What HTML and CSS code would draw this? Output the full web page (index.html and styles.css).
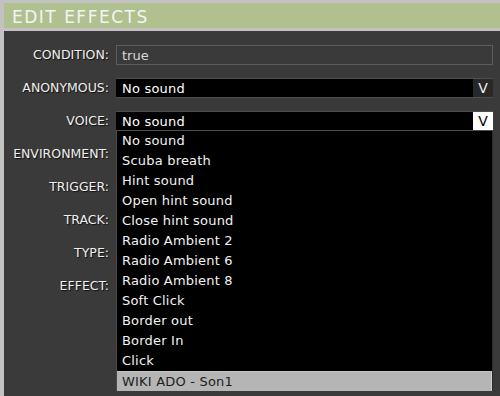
FILE: index.html
```html
<!DOCTYPE html>
<html lang="en">
<head>
  <meta charset="UTF-8">
  <title>Edit Effects</title>
  <link rel="stylesheet" href="styles.css">
</head>
<body>

  <div class="titlebar">EDIT EFFECTS</div>

  <div class="panel">
    <div class="row">
      <label class="lbl">CONDITION:</label>
      <div class="edit">true</div>
    </div>

    <div class="row">
      <label class="lbl">ANONYMOUS:</label>
      <div class="combo">
        <span class="combo-text">No sound</span>
        <span class="combo-btn">V</span>
      </div>
    </div>

    <div class="row">
      <label class="lbl">VOICE:</label>
      <div class="combo open">
        <span class="combo-text">No sound</span>
        <span class="combo-btn">V</span>

        <!-- open list of the voice combo -->
        <ul class="droplist">
          <li>No sound</li>
          <li>Scuba breath</li>
          <li>Hint sound</li>
          <li>Open hint sound</li>
          <li>Close hint sound</li>
          <li>Radio Ambient 2</li>
          <li>Radio Ambient 6</li>
          <li>Radio Ambient 8</li>
          <li>Soft Click</li>
          <li>Border out</li>
          <li>Border In</li>
          <li>Click</li>
          <li class="sel">WIKI ADO - Son1</li>
        </ul>
      </div>
    </div>

    <div class="row"><label class="lbl">ENVIRONMENT:</label><div class="blank"></div></div>
    <div class="row"><label class="lbl">TRIGGER:</label><div class="blank"></div></div>
    <div class="row"><label class="lbl">TRACK:</label><div class="blank"></div></div>
    <div class="row"><label class="lbl">TYPE:</label><div class="blank"></div></div>
    <div class="row"><label class="lbl">EFFECT:</label><div class="blank"></div></div>
  </div>

</body>
</html>
```

FILE: styles.css
```css
body { margin: 0; background: #c2c2c2; font-family: "DejaVu Sans", sans-serif; height: 396px; overflow: hidden; }
.titlebar {
  margin: 3px 0 0 4px; height: 25px; background: #b0c08e; color: #f4f4f4;
  font-size: 17px; letter-spacing: 1.5px; line-height: 28px; padding-left: 8px;
}
.panel {
  margin: 3px 0 0 4px; height: 365px; background: #3a3a3a;
  padding: 13px 7px 0 0; box-sizing: border-box;
  display: flex; flex-direction: column; gap: 13px;
}
.row { display: grid; grid-template-columns: 105px 1fr; column-gap: 7px; align-items: center; height: 20px; }
.lbl {
  text-align: right; color: #efefef; font-size: 12.5px; line-height: 21px;
  text-shadow: 1px 1px 1px #111;
}
.edit {
  height: 20px; box-sizing: border-box; border: 1px solid #5c5c5c; color: #d8d8d8;
  font-size: 13px; line-height: 19px; padding-left: 5px;
}
.combo {
  position: relative; height: 20px; box-sizing: border-box; background: #000;
  border-top: 1px solid #4e4e4e; border-bottom: 1px solid #4e4e4e;
  display: flex; color: #fff; font-size: 13px; line-height: 19px;
}
.combo-text { flex: 1; padding-left: 6px; letter-spacing: 0.2px; }
.combo-btn { width: 20px; background: #282828; text-align: center; font-size: 14px; color: #eee; }
.open .combo-btn { background: #fff; color: #000; }
.droplist {
  position: absolute; left: 0; right: 0; top: 19px; margin: 0; padding: 0; list-style: none;
  background: #000; border-left: 1px solid #4a4a4a; border-right: 1px solid #2a2a2a;
}
.droplist li { height: 20px; line-height: 20px; padding-left: 5px; color: #f2f2f2; font-size: 13px; letter-spacing: 0.2px; }
.droplist li.sel { background: #b5b5b5; color: #1e1e1e; border-right: 1px solid #d0d0d0; border-top: 1px solid #c4c4c4; height: 19px; line-height: 19px; }
.blank { height: 20px; }
```
